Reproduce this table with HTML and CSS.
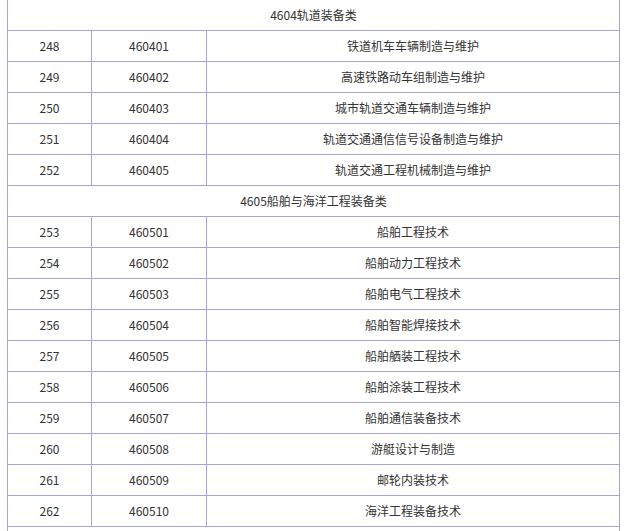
FILE: index.html
```html
<!DOCTYPE html>
<html lang="zh">
<head>
<meta charset="utf-8">
<link rel="stylesheet" href="styles.css">
</head>
<body>
<table class="majors">
  <colgroup><col class="c1"><col class="c2"><col class="c3"></colgroup>
  <tbody>
    <tr><td colspan="3">4604轨道装备类</td></tr>
    <tr><td>248</td><td>460401</td><td>铁道机车车辆制造与维护</td></tr>
    <tr><td>249</td><td>460402</td><td>高速铁路动车组制造与维护</td></tr>
    <tr><td>250</td><td>460403</td><td>城市轨道交通车辆制造与维护</td></tr>
    <tr><td>251</td><td>460404</td><td>轨道交通通信信号设备制造与维护</td></tr>
    <tr><td>252</td><td>460405</td><td>轨道交通工程机械制造与维护</td></tr>
    <tr><td colspan="3">4605船舶与海洋工程装备类</td></tr>
    <tr><td>253</td><td>460501</td><td>船舶工程技术</td></tr>
    <tr><td>254</td><td>460502</td><td>船舶动力工程技术</td></tr>
    <tr><td>255</td><td>460503</td><td>船舶电气工程技术</td></tr>
    <tr><td>256</td><td>460504</td><td>船舶智能焊接技术</td></tr>
    <tr><td>257</td><td>460505</td><td>船舶舾装工程技术</td></tr>
    <tr><td>258</td><td>460506</td><td>船舶涂装工程技术</td></tr>
    <tr><td>259</td><td>460507</td><td>船舶通信装备技术</td></tr>
    <tr><td>260</td><td>460508</td><td>游艇设计与制造</td></tr>
    <tr><td>261</td><td>460509</td><td>邮轮内装技术</td></tr>
    <tr><td>262</td><td>460510</td><td>海洋工程装备技术</td></tr>
    <tr><td colspan="3"></td></tr>
  </tbody>
</table>
</body>
</html>
```
FILE: styles.css
```css
html, body {
  margin: 0;
  padding: 0;
  background: #fff;
}
body {
  padding-left: 7px;
}
.majors {
  border-collapse: collapse;
  width: 612px;
  margin-top: -1px;
  table-layout: fixed;
  font-family: "Microsoft YaHei", "Noto Sans CJK SC", "Noto Sans", sans-serif;
  font-size: 12px;
  color: #333;
}
.c1 { width: 84px; }
.c2 { width: 115px; }
.c3 { width: 413px; }
.majors td {
  border: 1px solid #aaa3d4;
  height: 30px;
  padding: 0;
  text-align: center;
  vertical-align: middle;
  line-height: 30px;
}
```
